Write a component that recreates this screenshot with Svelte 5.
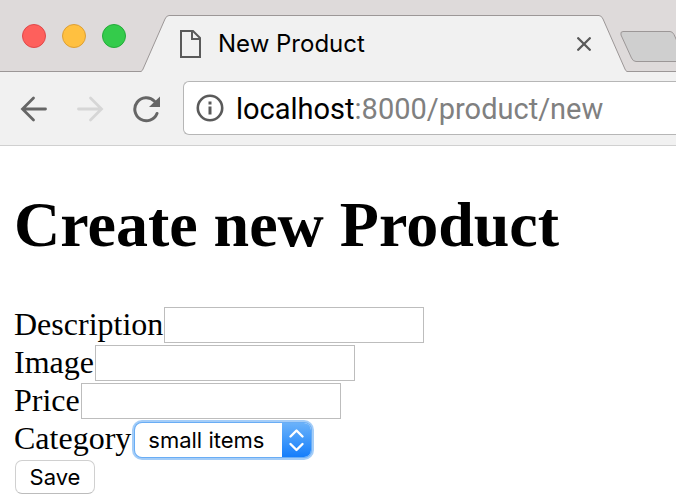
<script>
  const fields = [
    { id: 'description', label: 'Description' },
    { id: 'image', label: 'Image' },
    { id: 'price', label: 'Price' }
  ];
  let category = $state('small items');
</script>

<div class="browser">
  <header class="tabs">
    <div class="lights">
      <button class="light close" aria-label="Close window"></button>
      <button class="light minimise" aria-label="Minimise window"></button>
      <button class="light zoom" aria-label="Zoom window"></button>
    </div>
    <div class="tab">
      <svg class="edge" width="28" height="57" viewBox="0 0 28 57" aria-hidden="true">
        <path d="M0 57V56.5Q1.5 56 2.5 53L24 4Q25.5 .5 28 .5V57Z" fill="#f1f1f1" />
        <path d="M0 56.5Q1.5 56 2.5 53L24 4Q25.5 .5 28 .5" fill="none" stroke="#9c9797" />
      </svg>
      <div class="tab-body">
        <svg width="22" height="28" viewBox="0 0 22 28" aria-hidden="true">
          <path d="M1 1H13L20 8V27H1ZM12 1V9H20" fill="none" stroke="#5a5a5a" stroke-width="2" />
        </svg>
        <span class="title">New Product</span>
        <button class="tab-close" aria-label="Close tab">
          <svg width="14" height="14" viewBox="0 0 14 14" aria-hidden="true">
            <path d="M1.2 1.2L12.8 12.8M12.8 1.2L1.2 12.8" stroke="#5a5a5a" stroke-width="2.3" stroke-linecap="round" />
          </svg>
        </button>
      </div>
      <svg class="edge" width="28" height="57" viewBox="0 0 28 57" aria-hidden="true">
        <path d="M28 57V56.5Q26.5 56 25.5 53L4 4Q2.5 .5 0 .5V57Z" fill="#f1f1f1" />
        <path d="M28 56.5Q26.5 56 25.5 53L4 4Q2.5 .5 0 .5" fill="none" stroke="#9c9797" />
      </svg>
    </div>
    <button class="new-tab" aria-label="New tab">
      <svg width="66" height="32" viewBox="0 0 66 32" aria-hidden="true">
        <path d="M3 .5H50Q52.5 .5 54 3.5L65 28Q66 30.5 63 30.5H16Q13 30.5 11.5 27L1 4Q0 .5 3 .5Z" fill="#cfcfcf" stroke="#9c9797" />
      </svg>
    </button>
  </header>

  <nav class="toolbar" aria-label="Navigation">
    <button aria-label="Back">
      <svg width="28" height="28" viewBox="0 0 28 28" aria-hidden="true">
        <path d="M25.5 14H3M13.5 3L2.500 14L13.5 25" fill="none" stroke="#666" stroke-width="2.8" stroke-linecap="round" />
      </svg>
    </button>
    <button aria-label="Forward" disabled>
      <svg width="28" height="28" viewBox="0 0 28 28" aria-hidden="true">
        <path d="M2.5 14H25M14.5 3L25.5 14L14.5 25" fill="none" stroke="#d6d6d6" stroke-width="2.8" stroke-linecap="round" />
      </svg>
    </button>
    <button aria-label="Reload">
      <svg width="28" height="28" viewBox="0 0 28 28" aria-hidden="true">
        <path d="M25 18.5A11.5 11.5 0 1 1 22.5 6.2" fill="none" stroke="#666" stroke-width="3" stroke-linecap="round" />
        <path d="M28 1.5V12H17Z" fill="#666" />
      </svg>
    </button>
    <div class="address">
      <svg width="28" height="28" viewBox="0 0 28 28" aria-hidden="true">
        <circle cx="14" cy="14" r="12.2" fill="none" stroke="#5a5a5a" stroke-width="2.6" />
        <path d="M12.5 7.500h3v3h-3zM12.5 12.5h3v8h-3z" fill="#5a5a5a" />
      </svg>
      <span class="url">localhost<span class="path">:8000/product/new</span></span>
    </div>
  </nav>

  <main>
    <h1>Create new Product</h1>
    <form onsubmit={(event) => event.preventDefault()}>
      {#each fields as field}
        <div class="row">
          <label for={field.id}>{field.label}</label>
          <input id={field.id} name={field.id} type="text" />
        </div>
      {/each}
      <div class="row">
        <label for="category">Category</label>
        <div class="picker">
          <select id="category" name="category" bind:value={category}>
            <option>small items</option>
          </select>
          <svg class="arrows" width="29" height="34" viewBox="0 0 29 34" aria-hidden="true">
            <path d="M8.5 13.5L14.5 7.5L20.5 13.5M8.5 21L14.5 27L20.5 21" fill="none" stroke="#fff" stroke-width="2.4" stroke-linecap="round" stroke-linejoin="round" />
          </svg>
        </div>
      </div>
      <button class="save" type="submit">Save</button>
    </form>
  </main>
</div>

<style>
  :global(body) {
    margin: 0;
    background: #fff;
  }
  .browser {
    overflow: hidden;
  }
  button {
    padding: 0;
    border: 0;
    background: none;
  }
  svg {
    display: block;
    flex: none;
  }
  .tabs {
    display: flex;
    align-items: flex-end;
    height: 71px;
    border-bottom: 1px solid #9c9797;
    background: #dedada;
  }
  .lights {
    display: flex;
    flex: none;
    gap: 16px;
    padding: 0 15px 23px 22px;
  }
  .light {
    width: 24px;
    height: 24px;
    border: 1px solid #e0484a;
    border-radius: 50%;
    background: #fe605c;
  }
  .minimise {
    border-color: #dd9f35;
    background: #ffc040;
  }
  .zoom {
    border-color: #24ab39;
    background: #34cb4b;
  }
  .tab {
    display: flex;
    flex: none;
    margin-bottom: -1px;
  }
  .tab-body {
    box-sizing: border-box;
    display: flex;
    align-items: center;
    width: 430px;
    height: 57px;
    padding: 0 8px 0 11px;
    border-top: 1px solid #9c9797;
    background: #f1f1f1;
  }
  .title {
    flex: 1;
    margin-left: 16px;
    font: 24px/32px Inter, sans-serif;
    color: #000;
  }
  .new-tab {
    flex: none;
    margin: 0 0 8px -7px;
  }
  .toolbar {
    display: flex;
    align-items: center;
    gap: 28px;
    height: 73px;
    padding-left: 20px;
    border-bottom: 1px solid #d0d0d0;
    background: #f1f1f1;
  }
  .address {
    box-sizing: border-box;
    display: flex;
    flex: 1;
    align-items: center;
    gap: 12px;
    height: 54px;
    margin: 0 0 2px -5px;
    padding-left: 12px;
    border: 1px solid #b6b6b6;
    border-right: 0;
    border-radius: 6px 0 0 6px;
    background: #fff;
  }
  .url {
    padding-top: 2px;
    font: 29px/36px Roboto, sans-serif;
    color: #000;
    white-space: nowrap;
  }
  .path {
    color: #808080;
  }
  main {
    padding: 42px 14px 0;
    font: 32px/38px "Liberation Serif", serif;
    color: #000;
  }
  h1 {
    margin: 0 0 44px;
    font-size: 64px;
    line-height: 74px;
  }
  .row {
    display: flex;
    align-items: center;
    height: 38px;
  }
  label {
    padding-bottom: 2px;
  }
  input {
    box-sizing: border-box;
    width: 260px;
    height: 36px;
    margin-left: 1px;
    padding: 0 6px;
    border: 1px solid #bdbdbd;
    background: #fff;
    font: 24px Inter, sans-serif;
  }
  .picker {
    display: flex;
    align-items: center;
    margin-left: 4px;
    margin-top: 2px;
    border-radius: 7px;
    background: #fff;
    box-shadow: 0 0 0 1px #69adf5, 0 0 0 3px #a4cdf8;
  }
  select {
    width: 147px;
    height: 32px;
    margin: 0;
    padding: 0 0 0 13px;
    border: 0;
    outline: 0;
    appearance: none;
    background: none;
    font: 22px/32px Inter, sans-serif;
    color: #000;
  }
  .arrows {
    border-radius: 0 7px 7px 0;
    background: linear-gradient(#6ab2fa, #157efb);
    pointer-events: none;
  }
  .save {
    box-sizing: border-box;
    display: block;
    width: 80px;
    height: 34px;
    margin: 2px 1px;
    border: 1px solid #d0d0d0;
    border-bottom-color: #bcbcbc;
    border-radius: 7px;
    background: #fff;
    font: 22px/32px Inter, sans-serif;
    color: #000;
  }
</style>
